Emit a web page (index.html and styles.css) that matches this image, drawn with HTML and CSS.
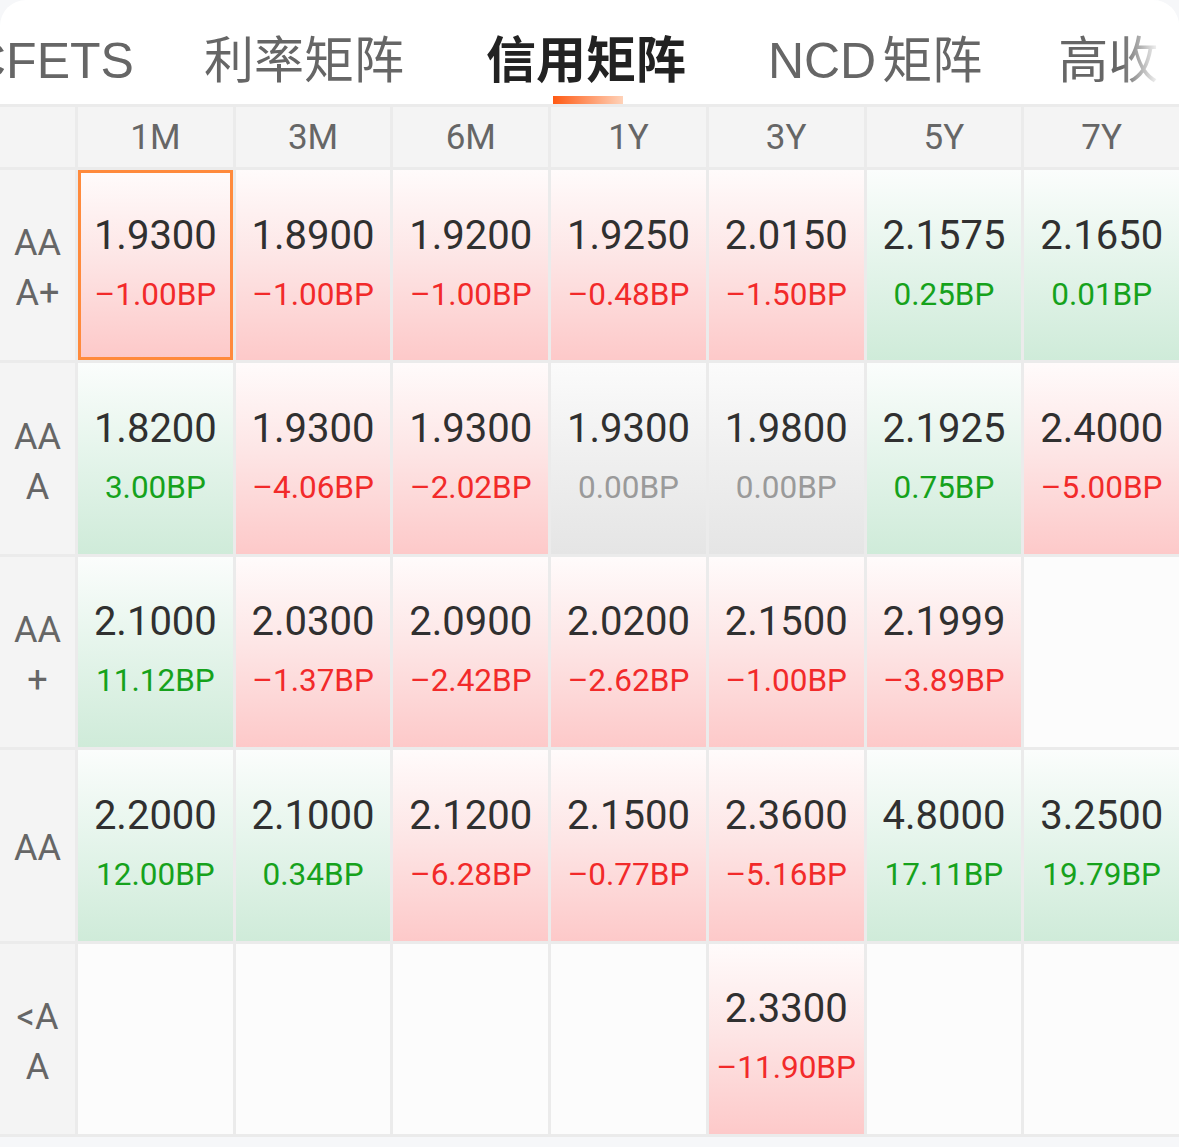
FILE: index.html
```html
<!DOCTYPE html>
<html lang="zh-CN">
<head>
<meta charset="utf-8">
<title>信用矩阵</title>
<link rel="stylesheet" href="styles.css">
</head>
<body>
<div class="card">
  <nav class="tabs">
    <div class="tab-track">
      <span class="tab tab-first">CFETS</span>
      <span class="tab">利率矩阵</span>
      <span class="tab active">信用矩阵</span>
      <span class="tab">NCD<span class="tab-cjk">矩阵</span></span>
      <span class="tab tab-last">高收益</span>
    </div>
    <div class="tab-fade"></div>
  </nav>
  <div class="matrix">
    <div class="corner"></div>
    <div class="head">1M</div><div class="head">3M</div><div class="head">6M</div><div class="head">1Y</div><div class="head">3Y</div><div class="head">5Y</div><div class="head">7Y</div>

    <div class="label">AAA+</div>
    <div class="cell down selected"><span class="val">1.9300</span><span class="chg">–1.00BP</span></div>
    <div class="cell down"><span class="val">1.8900</span><span class="chg">–1.00BP</span></div>
    <div class="cell down"><span class="val">1.9200</span><span class="chg">–1.00BP</span></div>
    <div class="cell down"><span class="val">1.9250</span><span class="chg">–0.48BP</span></div>
    <div class="cell down"><span class="val">2.0150</span><span class="chg">–1.50BP</span></div>
    <div class="cell up"><span class="val">2.1575</span><span class="chg">0.25BP</span></div>
    <div class="cell up"><span class="val">2.1650</span><span class="chg">0.01BP</span></div>

    <div class="label">AAA</div>
    <div class="cell up"><span class="val">1.8200</span><span class="chg">3.00BP</span></div>
    <div class="cell down"><span class="val">1.9300</span><span class="chg">–4.06BP</span></div>
    <div class="cell down"><span class="val">1.9300</span><span class="chg">–2.02BP</span></div>
    <div class="cell flat"><span class="val">1.9300</span><span class="chg">0.00BP</span></div>
    <div class="cell flat"><span class="val">1.9800</span><span class="chg">0.00BP</span></div>
    <div class="cell up"><span class="val">2.1925</span><span class="chg">0.75BP</span></div>
    <div class="cell down"><span class="val">2.4000</span><span class="chg">–5.00BP</span></div>

    <div class="label">AA+</div>
    <div class="cell up"><span class="val">2.1000</span><span class="chg">11.12BP</span></div>
    <div class="cell down"><span class="val">2.0300</span><span class="chg">–1.37BP</span></div>
    <div class="cell down"><span class="val">2.0900</span><span class="chg">–2.42BP</span></div>
    <div class="cell down"><span class="val">2.0200</span><span class="chg">–2.62BP</span></div>
    <div class="cell down"><span class="val">2.1500</span><span class="chg">–1.00BP</span></div>
    <div class="cell down"><span class="val">2.1999</span><span class="chg">–3.89BP</span></div>
    <div class="cell empty"></div>

    <div class="label">AA</div>
    <div class="cell up"><span class="val">2.2000</span><span class="chg">12.00BP</span></div>
    <div class="cell up"><span class="val">2.1000</span><span class="chg">0.34BP</span></div>
    <div class="cell down"><span class="val">2.1200</span><span class="chg">–6.28BP</span></div>
    <div class="cell down"><span class="val">2.1500</span><span class="chg">–0.77BP</span></div>
    <div class="cell down"><span class="val">2.3600</span><span class="chg">–5.16BP</span></div>
    <div class="cell up"><span class="val">4.8000</span><span class="chg">17.11BP</span></div>
    <div class="cell up"><span class="val">3.2500</span><span class="chg">19.79BP</span></div>

    <div class="label">&lt;AA</div>
    <div class="cell empty"></div>
    <div class="cell empty"></div>
    <div class="cell empty"></div>
    <div class="cell empty"></div>
    <div class="cell down"><span class="val">2.3300</span><span class="chg">–11.90BP</span></div>
    <div class="cell empty"></div>
    <div class="cell empty"></div>
  </div>
</div>
</body>
</html>
```

FILE: styles.css
```css
* { box-sizing: border-box; }

html, body {
  margin: 0;
  padding: 0;
}

body {
  background: #f6f7f9;
  font-family: Roboto, "Noto Sans CJK SC", "Liberation Sans", sans-serif;
  width: 1179px;
  height: 1147px;
  overflow: hidden;
}

.card {
  background: #ffffff;
  border-radius: 26px 26px 0 0;
  overflow: hidden;
}

.tabs {
  position: relative;
  height: 104px;
  overflow: hidden;
}

.tab-track {
  display: flex;
  gap: 82px;
  margin-left: -30px;
  white-space: nowrap;
}

.tab {
  position: relative;
  flex: none;
  font-size: 50px;
  line-height: 50px;
  padding-top: 36px;
  height: 104px;
  color: #666666;
  font-family: "Liberation Sans", "Noto Sans CJK SC", sans-serif;
}

.tab-first {
  margin-right: -12px;
}

.tab-last {
  margin-left: -6px;
}

.tab-cjk {
  margin-left: 6px;
}

.tab.active {
  color: #222222;
  font-weight: 700;
}

.tab.active::after {
  content: "";
  position: absolute;
  left: 50%;
  bottom: 0;
  width: 70px;
  height: 8px;
  margin-left: -33px;
  background: linear-gradient(to right, #ff5a14, #ffd2b8);
}

.tab-fade {
  position: absolute;
  top: 0;
  right: 0;
  width: 58px;
  height: 100%;
  background: linear-gradient(to right, rgba(255,255,255,0) 0%, #ffffff 68%);
}

.matrix {
  display: grid;
  grid-template-columns: 75px repeat(7, 1fr);
  grid-template-rows: 60px repeat(5, 190.4px);
  gap: 3px;
  padding: 3px 0;
  background: #ebebeb;
}

.corner,
.head,
.label {
  background: #f4f4f4;
}

.head {
  display: flex;
  align-items: center;
  justify-content: center;
  font-size: 35px;
  color: #666666;
}

.label {
  display: flex;
  align-items: center;
  justify-content: center;
  text-align: center;
  padding: 6px 7px 0;
  font-size: 36px;
  line-height: 50px;
  color: #666666;
  word-break: break-all;
}

.cell {
  display: flex;
  flex-direction: column;
  align-items: center;
  justify-content: center;
  background: #fcfcfc;
}

.cell.down {
  background: linear-gradient(to bottom, #fffbfb 0%, #fde6e6 45%, #fdc9c9 100%);
}

.cell.up {
  background: linear-gradient(to bottom, #fbfdfc 0%, #e6f5ec 45%, #cfebd9 100%);
}

.cell.flat {
  background: linear-gradient(to bottom, #fbfbfb 0%, #f0f0f0 45%, #e5e5e5 100%);
}

.cell.selected {
  border: 3px solid #ff8a3c;
}

.val {
  font-size: 40px;
  line-height: 50px;
  color: #303030;
  font-weight: 400;
}

.chg {
  font-size: 31.5px;
  line-height: 50px;
  margin-top: 9px;
  font-weight: 400;
}

.down .chg { color: #f22a2a; }
.up .chg { color: #16a21c; }
.flat .chg { color: #9a9a9a; }
```
